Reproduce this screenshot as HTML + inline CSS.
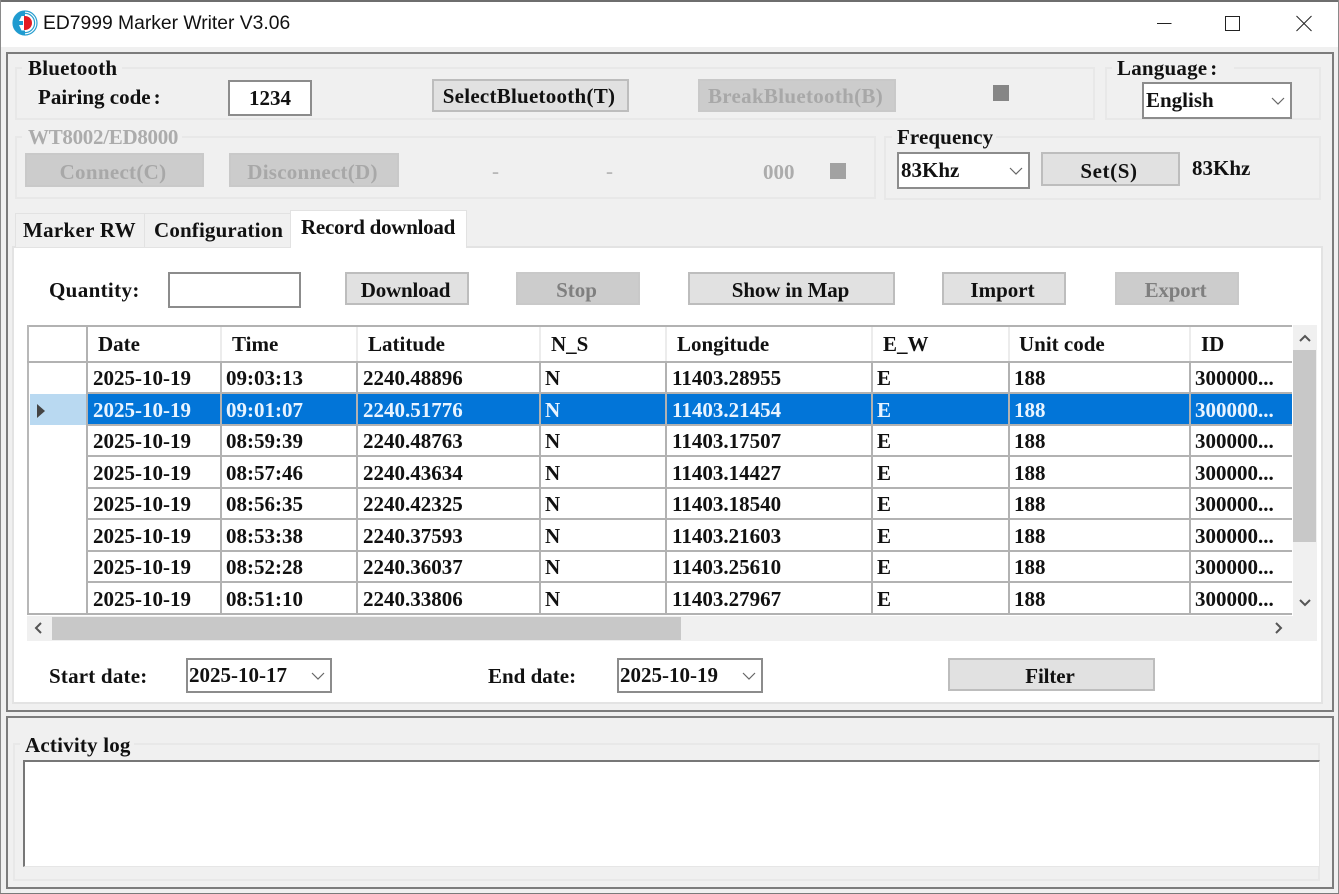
<!DOCTYPE html>
<html lang="en">
<head>
<meta charset="utf-8">
<title>ED7999 Marker Writer V3.06</title>
<style>
html,body{margin:0;padding:0;width:1339px;height:894px;overflow:hidden;background:#f0f0f0}
*{box-sizing:border-box}
body{position:relative;font:bold 21px/1 "Liberation Serif",serif;color:#111}
.a,.t,.b,.cell,.hd{position:absolute}
.t{white-space:nowrap;line-height:24px;height:24px}
.b{display:flex;align-items:center;justify-content:center;background:#e1e1e1;border:2px solid #bdbdbd;white-space:nowrap;padding-top:4px;padding-right:3px}
.b.d{background:#ccc;border-color:#c9c9c9;color:#a8a8a8}
.g{position:absolute;border:2px solid #e8e8e8}
.l{position:absolute;background:#f0f0f0;height:22px}
.i{position:absolute;background:#fff;border:2px solid #8c8c8c;display:flex;align-items:center;white-space:nowrap}
.i svg{position:absolute;right:5px;top:50%;margin-top:-4px}
.cell{top:0;line-height:31px;height:31px;white-space:nowrap}
.hd{top:326px;line-height:36px;height:36px;white-space:nowrap}
.row{position:absolute;left:88px;width:1204px;height:31px}
.sel{background:#0275d8;color:#e9f4ff}
.c1{left:5px}.c2{left:138px}.c3{left:275px}.c4{left:457px}.c5{left:584px}.c6{left:789px}.c7{left:926px}.c8{left:1107px}
.hl{position:absolute;left:27px;width:1265px;height:2px;background:#b2b2b2}
.vl{position:absolute;top:362px;width:2px;height:253px;background:#b2b2b2}
.hv{position:absolute;top:327px;width:2px;height:35px;background:#ececec}
</style>
</head>
<body>
<!-- window chrome -->
<div class="a" style="left:0;top:0;width:1339px;height:2px;background:#6e6e6e"></div>
<div class="a" style="left:0;top:0;width:1px;height:894px;background:#8a8a8a"></div>
<div class="a" style="right:0;top:0;width:1px;height:894px;background:#8a8a8a"></div>
<div class="a" style="left:0;top:893px;width:1339px;height:1px;background:#7a7a7a"></div>
<div class="a" style="left:1px;top:2px;width:1337px;height:45px;background:#fff"></div>
<svg class="a" style="left:12px;top:10px" width="26" height="26" viewBox="0 0 26 26">
<circle cx="13" cy="13" r="12" fill="none" stroke="#2a9fd0" stroke-width="1.2"/>
<circle cx="13" cy="13" r="9.6" fill="none" stroke="#2a9fd0" stroke-width="1.2"/>
<path d="M13 1A12 12 0 0 0 13 25V20.500H9.500L7 15H11V11H7L9.500 6H13Z" fill="#1f9bd0"/>
<path d="M12 6H13A7 7 0 0 1 13 20H12Z" fill="#e31b23"/>
</svg>
<div class="t" style="left:43px;top:12px;font:400 19.3px/24px 'Liberation Sans',sans-serif;color:#111">ED7999 Marker Writer V3.06</div>
<svg class="a" style="left:1150px;top:10px" width="170" height="26" viewBox="0 0 170 26" fill="none" stroke="#222" stroke-width="1">
<path d="M7 13.500H21.500"/>
<path d="M75.500 6.500H89.500V20.500H75.500Z"/>
<path d="M146.500 6L161.500 21M161.500 6L146.500 21"/>
</svg>

<!-- main panel -->
<div class="a" style="left:6px;top:52px;width:1328px;height:660px;border:2px solid #7c7c7c;background:#f0f0f0"></div>

<!-- bluetooth group -->
<div class="g" style="left:15px;top:67px;width:1080px;height:53px"></div>
<div class="l" style="left:22px;top:58px;width:100px"></div>
<div class="t" style="left:28px;top:56px;letter-spacing:.2px">Bluetooth</div>
<div class="t" style="left:38px;top:85px">Pairing code<span style="margin-left:3px">:</span></div>
<div class="i" style="left:228px;top:80px;width:84px;height:36px;justify-content:center">1234</div>
<div class="b" style="left:432px;top:79px;width:197px;height:33px;padding-top:2px;letter-spacing:.25px">SelectBluetooth(T)</div>
<div class="b d" style="left:698px;top:79px;width:198px;height:33px;padding-top:2px;letter-spacing:.3px">BreakBluetooth(B)</div>
<div class="a" style="left:993px;top:85px;width:16px;height:16px;background:#868686"></div>

<!-- language group -->
<div class="g" style="left:1105px;top:67px;width:216px;height:53px"></div>
<div class="l" style="left:1112px;top:58px;width:122px"></div>
<div class="t" style="left:1117px;top:56px;letter-spacing:.2px">Language<span style="margin-left:3px">:</span></div>
<div class="i" style="left:1142px;top:82px;width:150px;height:37px;padding-left:2px">English<svg width="14" height="8" viewBox="0 0 14 8" fill="none" stroke="#666" stroke-width="1.2"><path d="M1 1L7 7L13 1"/></svg></div>

<!-- WT group -->
<div class="g" style="left:15px;top:136px;width:861px;height:63px"></div>
<div class="l" style="left:22px;top:127px;width:160px"></div>
<div class="t" style="left:28px;top:125px;color:#acacac;letter-spacing:-.3px">WT8002/ED8000</div>
<div class="b d" style="left:25px;top:153px;width:179px;height:34px;letter-spacing:.3px">Connect(C)</div>
<div class="b d" style="left:229px;top:153px;width:170px;height:34px;letter-spacing:.25px">Disconnect(D)</div>
<div class="t" style="left:492px;top:159px;color:#b8b8b8">-</div>
<div class="t" style="left:606px;top:159px;color:#b8b8b8">-</div>
<div class="t" style="left:763px;top:160px;color:#acacac">000</div>
<div class="a" style="left:830px;top:163px;width:16px;height:16px;background:#a2a2a2"></div>

<!-- frequency group -->
<div class="g" style="left:884px;top:136px;width:437px;height:64px"></div>
<div class="l" style="left:892px;top:127px;width:104px"></div>
<div class="t" style="left:897px;top:125px;letter-spacing:.1px">Frequency</div>
<div class="i" style="left:897px;top:152px;width:133px;height:37px;padding-left:2px">83Khz<svg width="14" height="8" viewBox="0 0 14 8" fill="none" stroke="#666" stroke-width="1.2"><path d="M1 1L7 7L13 1"/></svg></div>
<div class="b" style="left:1041px;top:152px;width:139px;height:34px;letter-spacing:.6px">Set(S)</div>
<div class="t" style="left:1192px;top:156px">83Khz</div>

<!-- tabs -->
<div class="a" style="left:12px;top:246px;width:1311px;height:458px;background:#fff;border:2px solid #e3e3e3"></div>
<div class="a" style="left:15px;top:213px;width:130px;height:34px;background:#f0f0f0;border:1px solid #e2e2e2;border-bottom:0"></div>
<div class="a" style="left:144px;top:213px;width:147px;height:34px;background:#f0f0f0;border:1px solid #e2e2e2;border-bottom:0"></div>
<div class="a" style="left:290px;top:210px;width:177px;height:38px;background:#fff;border:1px solid #e2e2e2;border-bottom:0"></div>
<div class="t" style="left:23px;top:218px;letter-spacing:.3px">Marker RW</div>
<div class="t" style="left:154px;top:218px;letter-spacing:.15px">Configuration</div>
<div class="t" style="left:301px;top:215px;letter-spacing:-.27px">Record download</div>

<!-- toolbar -->
<div class="t" style="left:49px;top:278px;letter-spacing:.35px">Quantity:</div>
<div class="i" style="left:168px;top:272px;width:133px;height:36px"></div>
<div class="b" style="left:345px;top:272px;width:124px;height:33px;letter-spacing:-.2px">Download</div>
<div class="b d" style="left:516px;top:272px;width:124px;height:33px;color:#7f7f7f">Stop</div>
<div class="b" style="left:688px;top:272px;width:207px;height:33px;letter-spacing:-.15px;padding-right:2px">Show in Map</div>
<div class="b" style="left:942px;top:272px;width:124px;height:33px">Import</div>
<div class="b d" style="left:1115px;top:272px;width:124px;height:33px;color:#7f7f7f;letter-spacing:-.2px">Export</div>

<!-- grid -->
<div class="a" style="left:27px;top:325px;width:1265px;height:2px;background:#b2b2b2"></div>
<div class="a" style="left:27px;top:325px;width:2px;height:290px;background:#b8b8b8"></div>
<div class="hd" style="left:98px">Date</div>
<div class="hd" style="left:232px">Time</div>
<div class="hd" style="left:368px">Latitude</div>
<div class="hd" style="left:551px">N_S</div>
<div class="hd" style="left:677px">Longitude</div>
<div class="hd" style="left:883px">E_W</div>
<div class="hd" style="left:1019px">Unit code</div>
<div class="hd" style="left:1201px">ID</div>
<div class="hv" style="left:220px"></div><div class="hv" style="left:356px"></div><div class="hv" style="left:539px"></div><div class="hv" style="left:665px"></div><div class="hv" style="left:871px"></div><div class="hv" style="left:1008px"></div><div class="hv" style="left:1189px"></div>
<div class="a" style="left:86px;top:327px;width:2px;height:35px;background:#b2b2b2"></div>

<div class="a" style="left:30px;top:394px;width:57px;height:31px;background:#b9d9f1"></div>
<svg class="a" style="left:36px;top:404px" width="10" height="14" viewBox="0 0 10 14"><path d="M1 0L9 7L1 14Z" fill="#444"/></svg>
<div class="row sel" style="top:394px;left:88px;height:30px"></div>

<div class="row" style="top:363px"><span class="cell c1">2025-10-19</span><span class="cell c2">09:03:13</span><span class="cell c3">2240.48896</span><span class="cell c4">N</span><span class="cell c5">11403.28955</span><span class="cell c6">E</span><span class="cell c7">188</span><span class="cell c8">300000...</span></div>
<div class="row" style="top:395px;color:#e9f4ff"><span class="cell c1">2025-10-19</span><span class="cell c2">09:01:07</span><span class="cell c3">2240.51776</span><span class="cell c4">N</span><span class="cell c5">11403.21454</span><span class="cell c6">E</span><span class="cell c7">188</span><span class="cell c8">300000...</span></div>
<div class="row" style="top:426px"><span class="cell c1">2025-10-19</span><span class="cell c2">08:59:39</span><span class="cell c3">2240.48763</span><span class="cell c4">N</span><span class="cell c5">11403.17507</span><span class="cell c6">E</span><span class="cell c7">188</span><span class="cell c8">300000...</span></div>
<div class="row" style="top:458px"><span class="cell c1">2025-10-19</span><span class="cell c2">08:57:46</span><span class="cell c3">2240.43634</span><span class="cell c4">N</span><span class="cell c5">11403.14427</span><span class="cell c6">E</span><span class="cell c7">188</span><span class="cell c8">300000...</span></div>
<div class="row" style="top:489px"><span class="cell c1">2025-10-19</span><span class="cell c2">08:56:35</span><span class="cell c3">2240.42325</span><span class="cell c4">N</span><span class="cell c5">11403.18540</span><span class="cell c6">E</span><span class="cell c7">188</span><span class="cell c8">300000...</span></div>
<div class="row" style="top:521px"><span class="cell c1">2025-10-19</span><span class="cell c2">08:53:38</span><span class="cell c3">2240.37593</span><span class="cell c4">N</span><span class="cell c5">11403.21603</span><span class="cell c6">E</span><span class="cell c7">188</span><span class="cell c8">300000...</span></div>
<div class="row" style="top:552px"><span class="cell c1">2025-10-19</span><span class="cell c2">08:52:28</span><span class="cell c3">2240.36037</span><span class="cell c4">N</span><span class="cell c5">11403.25610</span><span class="cell c6">E</span><span class="cell c7">188</span><span class="cell c8">300000...</span></div>
<div class="row" style="top:584px"><span class="cell c1">2025-10-19</span><span class="cell c2">08:51:10</span><span class="cell c3">2240.33806</span><span class="cell c4">N</span><span class="cell c5">11403.27967</span><span class="cell c6">E</span><span class="cell c7">188</span><span class="cell c8">300000...</span></div>

<div class="hl" style="top:361px"></div><div class="hl" style="top:392px;left:87px;width:1205px"></div><div class="hl" style="top:424px;left:87px;width:1205px"></div><div class="hl" style="top:455px;left:87px;width:1205px"></div><div class="hl" style="top:487px;left:87px;width:1205px"></div><div class="hl" style="top:518px;left:87px;width:1205px"></div><div class="hl" style="top:550px;left:87px;width:1205px"></div><div class="hl" style="top:581px;left:87px;width:1205px"></div><div class="hl" style="top:613px;left:27px"></div>
<div class="vl" style="left:86px"></div><div class="vl" style="left:220px"></div><div class="vl" style="left:356px"></div><div class="vl" style="left:539px"></div><div class="vl" style="left:665px"></div><div class="vl" style="left:871px"></div><div class="vl" style="left:1008px"></div><div class="vl" style="left:1189px"></div>

<!-- scrollbars -->
<div class="a" style="left:1293px;top:325px;width:24px;height:291px;background:#f0f0f0"></div>
<div class="a" style="left:1293px;top:350px;width:23px;height:192px;background:#c8c8c8"></div>
<svg class="a" style="left:1298px;top:333px" width="14" height="10" viewBox="0 0 14 10" fill="none" stroke="#555" stroke-width="2"><path d="M2 8L7 3L12 8"/></svg>
<svg class="a" style="left:1298px;top:598px" width="14" height="10" viewBox="0 0 14 10" fill="none" stroke="#555" stroke-width="2"><path d="M2 2L7 7L12 2"/></svg>
<div class="a" style="left:27px;top:616px;width:1290px;height:25px;background:#f0f0f0"></div>
<div class="a" style="left:52px;top:617px;width:629px;height:23px;background:#c8c8c8"></div>
<svg class="a" style="left:33px;top:621px" width="10" height="14" viewBox="0 0 10 14" fill="none" stroke="#555" stroke-width="2"><path d="M8 2L3 7L8 12"/></svg>
<svg class="a" style="left:1274px;top:621px" width="10" height="14" viewBox="0 0 10 14" fill="none" stroke="#555" stroke-width="2"><path d="M2 2L7 7L2 12"/></svg>

<!-- filter row -->
<div class="t" style="left:49px;top:664px;letter-spacing:.2px">Start date:</div>
<div class="i" style="left:186px;top:658px;width:146px;height:35px;padding-left:1px">2025-10-17<svg width="14" height="8" viewBox="0 0 14 8" fill="none" stroke="#666" stroke-width="1.2"><path d="M1 1L7 7L13 1"/></svg></div>
<div class="t" style="left:488px;top:664px">End date:</div>
<div class="i" style="left:617px;top:658px;width:146px;height:35px;padding-left:1px">2025-10-19<svg width="14" height="8" viewBox="0 0 14 8" fill="none" stroke="#666" stroke-width="1.2"><path d="M1 1L7 7L13 1"/></svg></div>
<div class="b" style="left:948px;top:658px;width:207px;height:33px;letter-spacing:-.1px">Filter</div>

<!-- activity log -->
<div class="a" style="left:6px;top:716px;width:1328px;height:173px;border:2px solid #7c7c7c;background:#f0f0f0"></div>
<div class="g" style="left:13px;top:743px;width:1307px;height:138px"></div>
<div class="l" style="left:20px;top:734px;width:114px"></div>
<div class="t" style="left:25px;top:733px;letter-spacing:.2px">Activity log</div>
<div class="a" style="left:23px;top:760px;width:1297px;height:107px;background:#fff;border-top:2px solid #777;border-left:2px solid #777;border-right:1px solid #e6e6e6;border-bottom:1px solid #e6e6e6"></div>
</body>
</html>
